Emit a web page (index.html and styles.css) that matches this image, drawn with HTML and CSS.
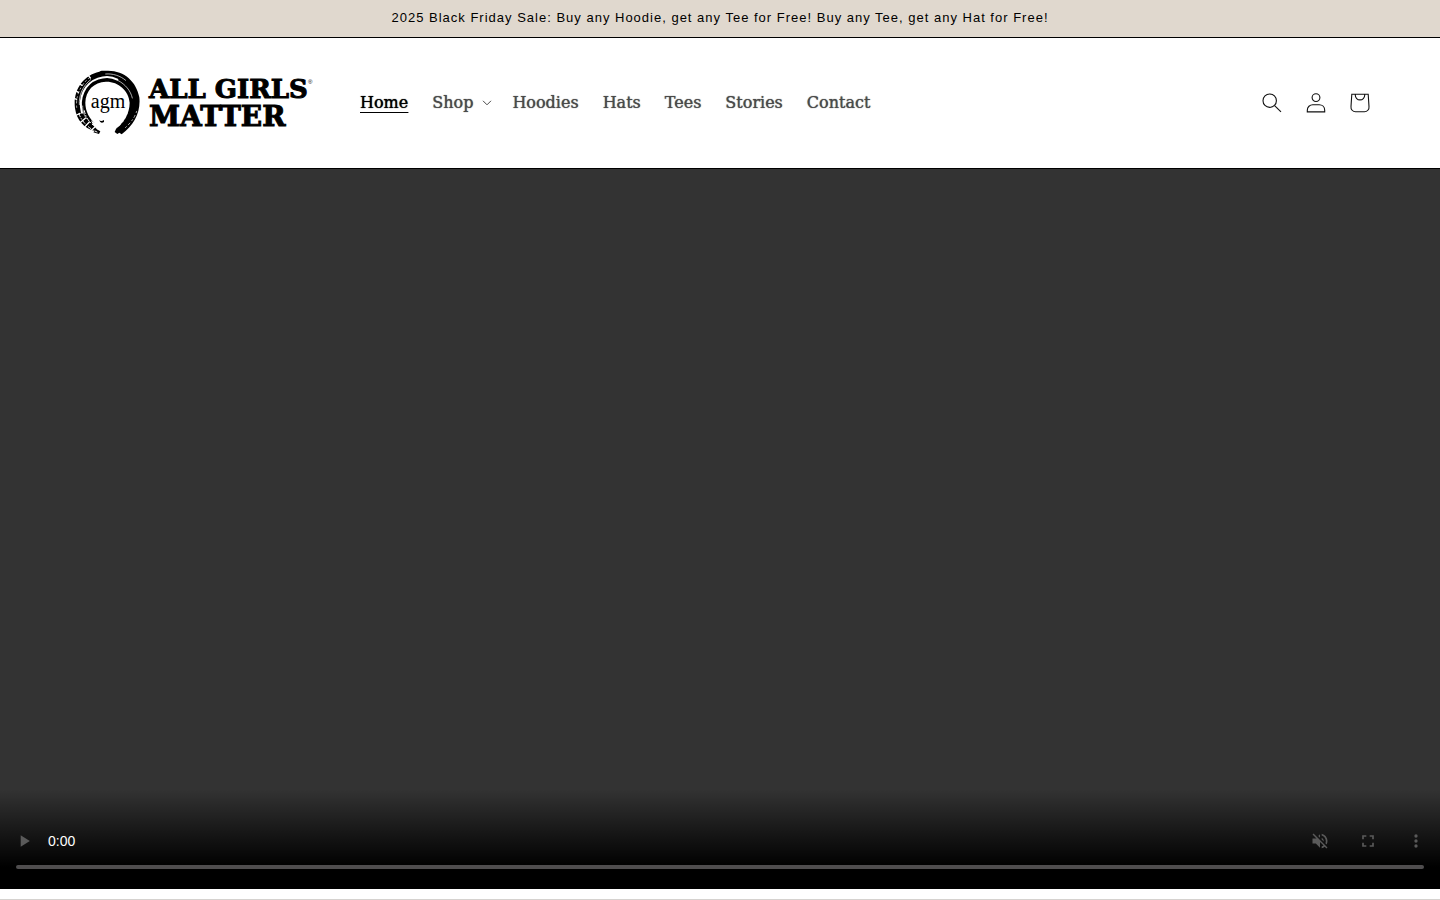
FILE: index.html
```html
<!DOCTYPE html>
<html lang="en">
<head>
<meta charset="utf-8">
<meta name="viewport" content="width=device-width, initial-scale=1">
<title>All Girls Matter</title>
<link rel="stylesheet" href="styles.css">
</head>
<body>
<div class="announcement"><p>2025 Black Friday Sale: Buy any Hoodie, get any Tee for Free! Buy any Tee, get any Hat for Free!</p></div>
<header class="header">
  <a class="logo" href="#" aria-label="All Girls Matter">
    <svg width="242" height="66" viewBox="0 0 242 66">
      <g transform="scale(.3333)">
        <path d="M75 192 L58 187 L62 183 C30 175 8 151 3 115 C-4 62 26 16 76 5 C82 0 92 4 98 2 C150 0 187 34 196 82 C201 126 180 166 143 193 L136 188 L130 192 L122 186 L127 175 C149 158 167 131 167 98 C164 61 132 34 96 35 C59 36 35 62 34 98 C34 123 46 147 65 162 L51 151 C56 166 65 178 79 184 Z"/>
        <g fill="none" stroke="#fff" stroke-linecap="round">
          <path stroke-width="6" d="M24 128 C12 83 32 40 72 26 C94 18 116 21 130 29"/>
          <path stroke-width="2" d="M16 104 C14 76 26 47 50 29 M38 146 C28 134 26 120 26 108 M133 32 C154 43 170 62 175 84 M95 12 C116 10 139 17 155 31"/>
          <path stroke-width="4" d="M2 86 L8 88 M8 64 L13 67 M17 42 L24 46 M8 135 L18 130 M20 157 L34 145 M33 170 L46 156 M50 182 L62 172 M43 16 L49 24"/>
          <path stroke-width="3" stroke-dasharray="9 6 2 7" d="M15 132 C25 158 45 175 69 186 M31 122 C35 144 48 160 66 171"/>
          <path stroke-width="2" stroke-dasharray="4 9 7 8" d="M8 112 C5 80 17 48 45 24 M188 124 C181 145 168 162 148 178 M160 128 C154 147 143 162 129 174"/>
        </g>
        <path d="M75 151 Q82 156 90 150 L90 156 Q83 161 79 156Z"/>
      </g>
      <text class="logo-mark" x="34" y="38" text-anchor="middle">agm</text>
      <text class="logo-name" x="75" y="28">ALL GIRLS</text>
      <text class="logo-name logo-name-wide" x="75" y="56">MATTER</text>
      <text class="logo-reg" x="234" y="14">®</text>
    </svg>
  </a>
  <nav class="nav">
    <a class="active" href="#">Home</a>
    <button type="button">Shop<svg width="10" height="6" viewBox="0 0 10 6" fill="none" stroke="currentColor"><path d="M1 .8 5 4.8 9 .8"/></svg></button>
    <a href="#">Hoodies</a>
    <a href="#">Hats</a>
    <a href="#">Tees</a>
    <a href="#">Stories</a>
    <a href="#">Contact</a>
  </nav>
  <div class="tools">
    <button type="button" aria-label="Search"><svg width="20" height="20" viewBox="0 0 20 20"><circle cx="7.7" cy="7.7" r="6.7"/><path d="m12.6 12.6 6.4 6.3"/></svg></button>
    <a href="#" aria-label="Log in"><svg width="20" height="20" viewBox="0 0 20 20"><circle cx="10" cy="4.6" r="3.9"/><path d="M1.3 18.9v-1.7c0-3.4 2.6-5.4 5.5-5.4h6.4c2.9 0 5.5 2 5.5 5.4v1.7z"/></svg></a>
    <a href="#" aria-label="Cart"><svg width="20" height="20" viewBox="0 0 20 20"><path d="M1.8 1.2h16.4l.8 12.4a4.6 4.6 0 0 1-4.6 5.2H5.6A4.6 4.6 0 0 1 1 13.6zM5.3 1.2v1a4.7 4.7 0 0 0 9.4 0v-1"/></svg></a>
  </div>
</header>
<main>
  <section class="player" aria-label="Video">
    <div class="controls">
      <div class="control-row">
        <button class="play" type="button" aria-label="Play"><svg width="20" height="20" viewBox="0 0 24 24"><path d="M8 5v14l11-7z"/></svg></button>
        <span class="time">0:00</span>
        <button type="button" aria-label="Unmute"><svg width="20" height="20" viewBox="0 0 24 24"><path d="M16.5 12A4.5 4.5 0 0 0 14 7.97v2.21l2.45 2.45c.03-.2.05-.41.05-.63zm2.5 0c0 .94-.2 1.82-.54 2.64l1.51 1.51A8.8 8.8 0 0 0 21 12c0-4.28-2.99-7.86-7-8.77v2.06c2.89.86 5 3.54 5 6.71zM4.27 3 3 4.27 7.73 9H3v6h4l5 5v-6.73l4.25 4.25c-.67.52-1.42.93-2.25 1.18v2.06a8.99 8.99 0 0 0 3.69-1.81L19.73 21 21 19.73l-9-9L4.27 3zM12 4 9.91 6.09 12 8.18V4z"/></svg></button>
        <button type="button" aria-label="Full screen"><svg width="20" height="20" viewBox="0 0 24 24"><path d="M7 14H5v5h5v-2H7v-3zm-2-4h2V7h3V5H5v5zm12 7h-3v2h5v-5h-2v3zM14 5v2h3v3h2V5h-5z"/></svg></button>
        <button type="button" aria-label="More options"><svg width="20" height="20" viewBox="0 0 24 24"><path d="M12 8a2 2 0 1 0 0-4 2 2 0 0 0 0 4zm0 2a2 2 0 1 0 0 4 2 2 0 0 0 0-4zm0 6a2 2 0 1 0 0 4 2 2 0 0 0 0-4z"/></svg></button>
      </div>
      <input class="timeline" type="range" min="0" max="100" value="0" aria-label="Video position" disabled>
    </div>
  </section>
  <section class="next"></section>
</main>
</body>
</html>
```
FILE: styles.css
```css
* { box-sizing: border-box; }
body { margin: 0; background: #fff; color: #000; font-family: "Liberation Sans", Arial, sans-serif; }
button { border: 0; padding: 0; background: none; color: inherit; font: inherit; cursor: pointer; }
a { color: inherit; text-decoration: none; }
.announcement { background: #e0d8ce; border-bottom: 1px solid #000; padding: 7px 16px 8px; text-align: center; }
.announcement p { margin: 0; font-size: 13px; line-height: 22px; letter-spacing: 1px; }
.header { display: flex; align-items: center; min-height: 131px; padding: 0 58px 0 74px; border-bottom: 1px solid #000; }
.logo { display: flex; flex: none; }
.logo-mark { font: 20px "Liberation Serif", serif; }
.logo-name { font: bold 26px "DejaVu Serif", serif; stroke: #000; stroke-width: 1px; }
.logo-name-wide { font-size: 28px; }
.logo-reg { font: 6px "Liberation Sans", sans-serif; }
.nav { display: flex; flex-wrap: wrap; gap: 24px; margin-left: 44px; color: #4a4a4a; font: 16px/20px "DejaVu Serif", serif; text-shadow: 0 0 1px currentColor; }
.nav button { display: flex; align-items: center; gap: 9px; margin-right: -4px; text-shadow: inherit; }
.nav .active { color: #000; text-shadow: 0 0 1px #000; text-decoration: underline; text-underline-offset: 4px; text-decoration-thickness: 1px; }
.tools { display: flex; margin-left: auto; }
.tools > * { display: grid; place-items: center; width: 44px; height: 44px; }
.tools svg { fill: none; stroke: #111; stroke-width: 1.1; }
.player { display: flex; align-items: flex-end; aspect-ratio: 2 / 1; background: #333; }
.controls { flex: 1; padding-top: 36px; background: linear-gradient(transparent, rgba(0, 0, 0, .3) 24px, #000 78px); }
.control-row { display: flex; align-items: center; height: 32px; color: #5a5a5a; }
.control-row button { display: grid; place-items: center; width: 48px; height: 32px; }
.control-row svg { fill: currentColor; }
.time { margin-right: auto; color: #fff; font-size: 14px; }
.timeline { display: block; appearance: none; width: calc(100% - 32px); height: 4px; margin: 8px 16px 20px; border-radius: 2px; background: #4f4d4e; }
.timeline::-webkit-slider-thumb { appearance: none; width: 0; height: 0; }
.next { min-height: 11px; border-bottom: 1px solid #d5d2cf; }
```
